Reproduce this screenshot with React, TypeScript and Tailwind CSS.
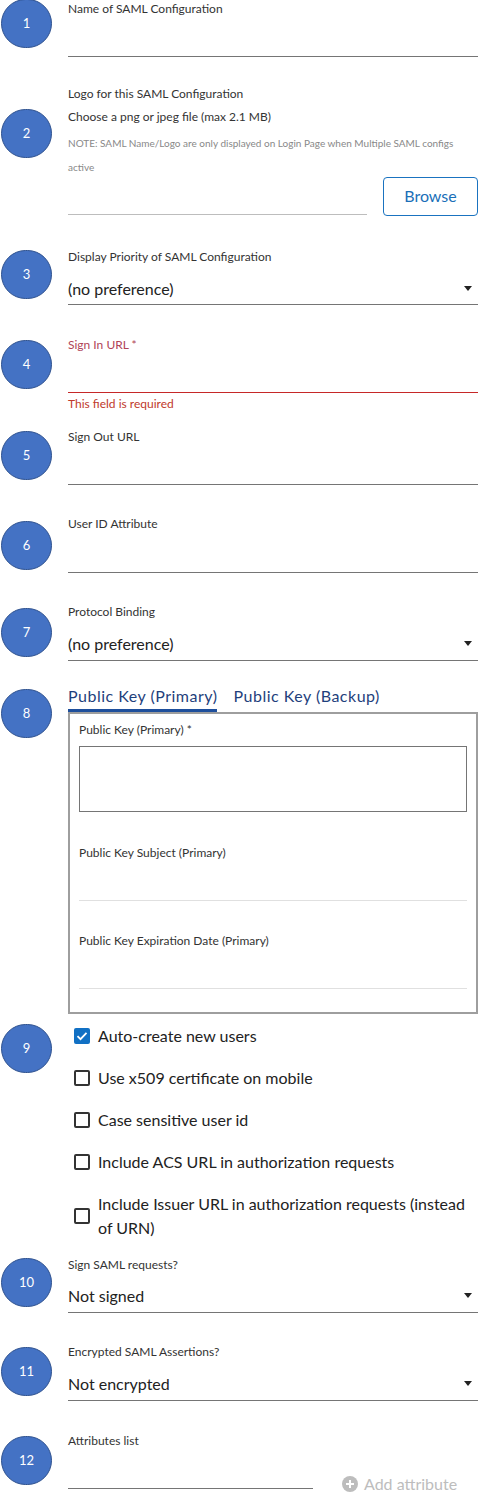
import React from 'react';

const font = { fontFamily: 'Lato, "Noto Sans", sans-serif' };

const Step: React.FC<{ n: number; className: string }> = ({ n, className }) => (
  <div
    className={`w-[51px] h-[49px] shrink-0 rounded-full bg-[#4472c4] border border-[#2f528f] flex items-center justify-center text-white text-[13px] ${className}`}
  >
    {n}
  </div>
);

const Row: React.FC<{ n: number; circle: string; className: string; children: React.ReactNode }> = ({
  n,
  circle,
  className,
  children,
}) => (
  <div className={`flex items-start ${className}`}>
    <Step n={n} className={circle} />
    <div className="ml-4 flex-1 min-w-0">{children}</div>
  </div>
);

const Label: React.FC<{ children: React.ReactNode; className?: string }> = ({ children, className = '' }) => (
  <div className={`text-[12px] leading-[18px] h-[18px] text-[#333] ${className}`}>{children}</div>
);

const Arrow = () => (
  <svg width="8" height="5" viewBox="0 0 8 5" className="mr-[6px] mb-[9px]">
    <path d="M0 0h8L4 5z" fill="#222" />
  </svg>
);

const Select: React.FC<{ value: string; className: string }> = ({ value, className }) => (
  <div className={`flex items-end justify-between border-b border-[#757575] ${className}`}>
    <span className="text-[16px] leading-[22px] text-[#222]">{value}</span>
    <Arrow />
  </div>
);

const Checkbox: React.FC<{ checked?: boolean }> = ({ checked }) =>
  checked ? (
    <div className="w-4 h-4 shrink-0 rounded-[2px] bg-[#1170c4] flex items-center justify-center">
      <svg width="12" height="10" viewBox="0 0 12 10">
        <path d="M1.5 5.2l3 3L10.5 1.8" stroke="#fff" strokeWidth="1.8" fill="none" />
      </svg>
    </div>
  ) : (
    <div className="w-4 h-4 shrink-0 rounded-[2px] border-2 border-[#333]" />
  );

const Check: React.FC<{ label: string; checked?: boolean }> = ({ label, checked }) => (
  <div className="flex items-center pl-[6px]">
    <Checkbox checked={checked} />
    <span className="ml-2 text-[16px] leading-[24px] text-[#222]">{label}</span>
  </div>
);

export default function App() {
  return (
    <div className="w-[485px] bg-white pl-[1px] pr-[7px] pb-[10px]" style={font}>
      <Row n={1} circle="-mt-[1px]" className="">
        <Label>Name of SAML Configuration</Label>
        <div className="h-[39px] border-b border-[#757575]" />
      </Row>

      <Row n={2} circle="mt-[24px]" className="mt-[28px]">
        <Label>Logo for this SAML Configuration</Label>
        <Label className="mt-[5px]">Choose a png or jpeg file (max 2.1 MB)</Label>
        <div className="mt-[5px] text-[10px] leading-[24px] text-[#888]">
          NOTE: SAML Name/Logo are only displayed on Login Page when Multiple SAML configs active
        </div>
        <div className="-mt-[2px] flex items-end">
          <div className="w-[299px] mb-[1px] h-[30px] border-b border-[#bdbdbd]" />
          <button className="ml-auto w-[95px] h-[39px] rounded-[4px] border border-[#1a73c0] text-[16px] leading-[20px] pb-[2px] text-[#1a6fb8]">
            Browse
          </button>
        </div>
      </Row>

      <Row n={3} circle="mt-[2px]" className="mt-[32px]">
        <Label>Display Priority of SAML Configuration</Label>
        <Select value="(no preference)" className="h-[39px] pb-[4px]" />
      </Row>

      <Row n={4} circle="mt-[4px]" className="mt-[31px]">
        <Label className="!text-[#b04357]">Sign In URL *</Label>
        <div className="h-[39px] border-b border-[#c62828]" />
        <div className="mt-[2px] text-[12px] leading-[18px] text-[#c0392b]">This field is required</div>
      </Row>

      <Row n={5} circle="mt-[3px]" className="mt-[15px]">
        <Label>Sign Out URL</Label>
        <div className="h-[39px] border-b border-[#757575]" />
      </Row>

      <Row n={6} circle="mt-[6px]" className="mt-[30px]">
        <Label>User ID Attribute</Label>
        <div className="h-[40px] border-b border-[#757575]" />
      </Row>

      <Row n={7} circle="mt-[5px]" className="mt-[30px]">
        <Label>Protocol Binding</Label>
        <Select value="(no preference)" className="h-[40px] pb-[5px]" />
      </Row>

      <Row n={8} circle="mt-[4px]" className="mt-[24px]">
        <div className="flex gap-4 text-[16px] leading-[22px] tracking-[0.5px] text-[#1f3f7c]">
          <div className="pb-[2px] border-b-[3px] border-[#1e4f9c]">Public Key (Primary)</div>
          <div className="pb-[2px] border-b-[3px] border-transparent">Public Key (Backup)</div>
        </div>
        <div className="border-2 border-[#9e9e9e] pt-[7px] px-[9px] pb-[23px]">
          <Label>Public Key (Primary) *</Label>
          <div className="mt-[7px] h-[66px] border border-[#757575]" />
          <Label className="mt-[32px]">Public Key Subject (Primary)</Label>
          <div className="h-[39px] border-b border-[#e0e0e0]" />
          <Label className="mt-[31px]">Public Key Expiration Date (Primary)</Label>
          <div className="h-[39px] border-b border-[#e0e0e0]" />
        </div>
      </Row>

      <Row n={9} circle="mt-0" className="mt-[10px]">
        <div className="flex flex-col gap-[18px]">
          <Check checked label="Auto-create new users" />
          <Check label="Use x509 certificate on mobile" />
          <Check label="Case sensitive user id" />
          <Check label="Include ACS URL in authorization requests" />
          <Check label="Include Issuer URL in authorization requests (instead of URN)" />
        </div>
      </Row>

      <Row n={10} circle="mt-[2px]" className="mt-[16px]">
        <Label>Sign SAML requests?</Label>
        <Select value="Not signed" className="h-[39px] pb-[5px]" />
      </Row>

      <Row n={11} circle="mt-[4px]" className="mt-[30px]">
        <Label>Encrypted SAML Assertions?</Label>
        <Select value="Not encrypted" className="h-[40px] pb-[5px]" />
      </Row>

      <Row n={12} circle="mt-[4px]" className="mt-[31px]">
        <Label>Attributes list</Label>
        <div className="flex items-end">
          <div className="w-[245px] h-[39px] border-b border-[#757575]" />
          <div className="ml-[29px] mb-[-6px] flex items-center text-[16px] leading-[22px] text-[#bdbdbd]">
            <svg width="16" height="16" viewBox="0 0 16 16" className="mr-[6px]">
              <circle cx="8" cy="8" r="8" fill="#bdbdbd" />
              <path d="M8 4v8M4 8h8" stroke="#fff" strokeWidth="2" />
            </svg>
            Add attribute
          </div>
        </div>
      </Row>
    </div>
  );
}
